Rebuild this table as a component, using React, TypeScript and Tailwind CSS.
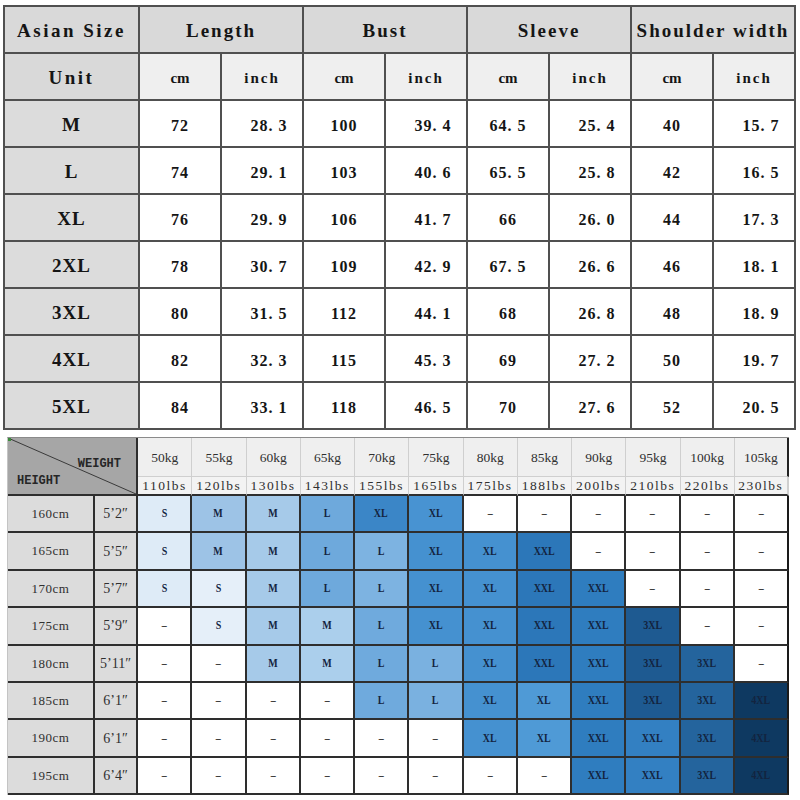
const sizes = [
  { label: "M", values: ["72", "28.3", "100", "39.4", "64.5", "25.4", "40", "15.7"] },
  { label: "L", values: ["74", "29.1", "103", "40.6", "65.5", "25.8", "42", "16.5"] },
  { label: "XL", values: ["76", "29.9", "106", "41.7", "66", "26.0", "44", "17.3"] },
  { label: "2XL", values: ["78", "30.7", "109", "42.9", "67.5", "26.6", "46", "18.1"] },
  { label: "3XL", values: ["80", "31.5", "112", "44.1", "68", "26.8", "48", "18.9"] },
  { label: "4XL", values: ["82", "32.3", "115", "45.3", "69", "27.2", "50", "19.7"] },
  { label: "5XL", values: ["84", "33.1", "118", "46.5", "70", "27.6", "52", "20.5"] },
];

const measures = ["Length", "Bust", "Sleeve", "Shoulder width"];

const weights = [
  ["50kg", "110lbs"],
  ["55kg", "120lbs"],
  ["60kg", "130lbs"],
  ["65kg", "143lbs"],
  ["70kg", "155lbs"],
  ["75kg", "165lbs"],
  ["80kg", "175lbs"],
  ["85kg", "188lbs"],
  ["90kg", "200lbs"],
  ["95kg", "210lbs"],
  ["100kg", "220lbs"],
  ["105kg", "230lbs"],
];

const heights = [
  ["160cm", "5’2″"],
  ["165cm", "5’5″"],
  ["170cm", "5’7″"],
  ["175cm", "5’9″"],
  ["180cm", "5’11″"],
  ["185cm", "6’1″"],
  ["190cm", "6’1″"],
  ["195cm", "6’4″"],
];

type Fit = [string, string];
const D: Fit = ["–", "#ffffff"];

// recommended size per height row / weight column, with the cell shade
const fits: Fit[][] = [
  [["S", "#deebf7"], ["M", "#9dc3e6"], ["M", "#a6cae9"], ["L", "#6ea9dc"], ["XL", "#3b86c7"], ["XL", "#4893d2"], D, D, D, D, D, D],
  [["S", "#deebf7"], ["M", "#9dc3e6"], ["M", "#a6cae9"], ["L", "#6ea9dc"], ["L", "#7db3e1"], ["XL", "#4591d0"], ["XL", "#4591d0"], ["XXL", "#2c77b9"], D, D, D, D],
  [["S", "#deebf7"], ["S", "#e5eff9"], ["M", "#a6cae9"], ["L", "#6ea9dc"], ["L", "#7db3e1"], ["XL", "#4591d0"], ["XL", "#4591d0"], ["XXL", "#2c77b9"], ["XXL", "#2f7dbf"], D, D, D],
  [D, ["S", "#e5eff9"], ["M", "#a6cae9"], ["M", "#abcfec"], ["L", "#6faadd"], ["XL", "#4591d0"], ["XL", "#4591d0"], ["XXL", "#2c77b9"], ["XXL", "#2f7dbf"], ["3XL", "#1e5a91"], D, D],
  [D, D, ["M", "#a6cae9"], ["M", "#abcfec"], ["L", "#6faadd"], ["L", "#7ab1e0"], ["XL", "#4591d0"], ["XXL", "#2c77b9"], ["XXL", "#2f7dbf"], ["3XL", "#1e5a91"], ["3XL", "#24649d"], D],
  [D, D, D, D, ["L", "#6faadd"], ["L", "#7ab1e0"], ["XL", "#4591d0"], ["XL", "#4f9ad6"], ["XXL", "#2f7dbf"], ["3XL", "#1e5a91"], ["3XL", "#24649d"], ["4XL", "#0e3961"]],
  [D, D, D, D, D, D, ["XL", "#4591d0"], ["XL", "#4f9ad6"], ["XXL", "#2f7dbf"], ["XXL", "#3380c2"], ["3XL", "#24649d"], ["4XL", "#0e3961"]],
  [D, D, D, D, D, D, D, D, ["XXL", "#2f7dbf"], ["XXL", "#3380c2"], ["3XL", "#24649d"], ["4XL", "#0e3961"]],
];

const topCell =
  "flex items-center justify-center border-r-2 border-b-2 border-[#505050] pt-[4px]";
const dataCell =
  "flex items-center justify-center border-r-2 border-b-2 border-[#2e2e2e]";

export default function App() {
  return (
    <div className="h-[800px] w-[800px] overflow-hidden bg-white font-['Liberation_Serif',serif] text-[#151515]">
      {/* size chart */}
      <div className="ml-[3px] mt-[5px] grid w-[793px] grid-cols-[135px_repeat(8,82px)] grid-rows-[repeat(9,47px)] border-l-2 border-t-2 border-[#505050] font-bold">
        <div className={`${topCell} bg-[#d9d9d9] text-[19px] tracking-[2.5px]`}>Asian Size</div>
        {measures.map((m) => (
          <div key={m} className={`${topCell} col-span-2 bg-[#d9d9d9] text-[19px] tracking-[2px]`}>
            {m}
          </div>
        ))}

        <div className={`${topCell} bg-[#d9d9d9] text-[19px] tracking-[2.5px]`}>Unit</div>
        {measures.map((m) => (
          <div key={m} className="contents">
            <div className={`${topCell} bg-[#efefef] text-[15px]`}>cm</div>
            <div className={`${topCell} bg-[#efefef] text-[15px] tracking-[2px]`}>inch</div>
          </div>
        ))}

        {sizes.map((s) => (
          <div key={s.label} className="contents">
            <div className={`${topCell} bg-[#dcdcdc] text-[19px] tracking-[1px]`}>{s.label}</div>
            {s.values.map((v, i) => (
              <div
                key={i}
                className={`${topCell} bg-white text-[16px] tracking-[1px] ${i % 2 ? "pl-[14px]" : ""}`}
              >
                {v.replace(".", ". ")}
              </div>
            ))}
          </div>
        ))}
      </div>

      {/* height / weight chart */}
      <div className="ml-[7px] mt-[7px] grid w-[782px] grid-cols-[87px_43px_repeat(12,54.25px)] grid-rows-[39px_19px_repeat(8,37.4px)] border-l border-t border-l-[#c4c4c4] border-t-[#8a8a8a] text-[#2f2f2f]">
        <div className="relative col-span-2 row-span-2 flex flex-col border-r-2 border-b-2 border-[#2e2e2e] bg-[#a6a6a6] pt-[19px] font-['Liberation_Mono',monospace] text-[12px] font-bold leading-[14px] text-[#262626]">
          <svg className="absolute inset-0 h-full w-full" preserveAspectRatio="none" viewBox="0 0 128 56">
            <line x1="0" y1="0" x2="128" y2="56" stroke="#3a3a3a" strokeWidth="1" vectorEffect="non-scaling-stroke" />
          </svg>
          <span className="absolute left-0 top-0 h-[3px] w-[3px] bg-[#3a8a3a]" />
          <span className="relative self-end pr-[15px]">WEIGHT</span>
          <span className="relative mt-[3px] pl-[9px]">HEIGHT</span>
        </div>
        {weights.map(([kg], i) => (
          <div
            key={kg}
            className={`flex items-center justify-center border-b border-r border-[#cfcfcf] bg-[#efefef] pt-[3px] text-[13.5px] ${i === 11 ? "border-r-2 border-r-[#222]" : ""}`}
          >
            {kg}
          </div>
        ))}
        {weights.map(([, lbs], i) => (
          <div
            key={lbs}
            className={`flex items-center justify-center border-b-2 border-r border-b-[#2e2e2e] border-r-[#cfcfcf] bg-[#f3f3f3] text-[13.5px] leading-none tracking-[1.5px] ${i === 11 ? "border-r-2 border-r-[#222]" : ""}`}
          >
            {lbs}
          </div>
        ))}

        {heights.map(([cm, ft], r) => (
          <div key={cm} className="contents">
            <div className={`${dataCell} bg-[#dcdcdc] text-[13px] tracking-[0.5px]`}>{cm}</div>
            <div className={`${dataCell} bg-[#dcdcdc] text-[14px]`}>{ft}</div>
            {fits[r].map(([size, color], c) => (
              <div
                key={c}
                className={`${dataCell} text-[12.5px] ${size === "–" ? "font-bold text-[#333]" : "font-bold text-[#13243f]"} ${c === 11 ? "border-r-[#1a1a1a]" : ""}`}
                style={{ backgroundColor: color }}
              >
                <span className="inline-block scale-x-[0.8]">{size}</span>
              </div>
            ))}
          </div>
        ))}
      </div>
    </div>
  );
}
